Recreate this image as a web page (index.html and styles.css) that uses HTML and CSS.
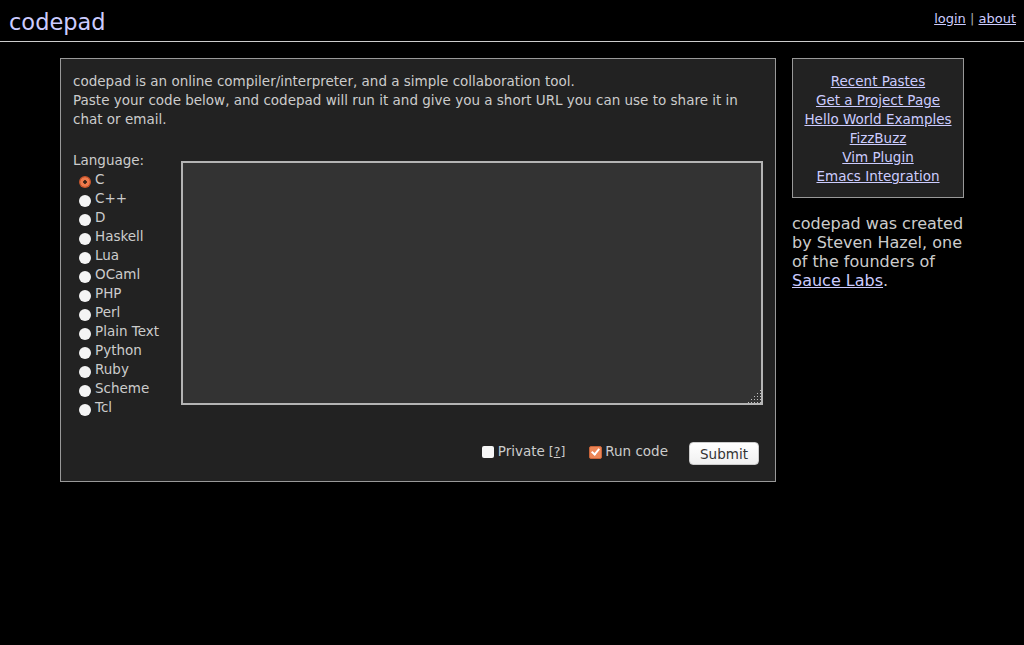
FILE: index.html
```html
<!DOCTYPE html>
<html>
<head>
<meta charset="utf-8">
<title>codepad</title>
<link rel="stylesheet" href="styles.css">
</head>
<body>
<header class="topbar">
  <a class="logo" href="#">codepad</a>
  <nav class="toplinks"><a href="#">login</a> <span class="sep">|</span> <a href="#">about</a></nav>
</header>
<div class="page">
  <main class="mainbox">
    <p class="intro">codepad is an online compiler/interpreter, and a simple collaboration tool.<br>Paste your code below, and codepad will run it and give you a short URL you can use to share it in chat or email.</p>
    <form class="pasteform">
      <div class="editrow">
        <div class="langs">
          <div class="langlabel">Language:</div>
          <label class="lang"><input type="radio" name="lang" checked>C</label>
          <label class="lang"><input type="radio" name="lang">C++</label>
          <label class="lang"><input type="radio" name="lang">D</label>
          <label class="lang"><input type="radio" name="lang">Haskell</label>
          <label class="lang"><input type="radio" name="lang">Lua</label>
          <label class="lang"><input type="radio" name="lang">OCaml</label>
          <label class="lang"><input type="radio" name="lang">PHP</label>
          <label class="lang"><input type="radio" name="lang">Perl</label>
          <label class="lang"><input type="radio" name="lang">Plain Text</label>
          <label class="lang"><input type="radio" name="lang">Python</label>
          <label class="lang"><input type="radio" name="lang">Ruby</label>
          <label class="lang"><input type="radio" name="lang">Scheme</label>
          <label class="lang"><input type="radio" name="lang">Tcl</label>
        </div>
        <textarea class="code"></textarea>
      </div>
      <div class="actions">
        <label class="opt"><input type="checkbox">Private <span class="help">[<a href="#">?</a>]</span></label>
        <label class="opt run"><input type="checkbox" checked>Run code</label>
        <button type="button" class="submit">Submit</button>
      </div>
    </form>
  </main>
  <aside class="side">
    <div class="sidebox">
      <a href="#">Recent Pastes</a>
      <a href="#">Get a Project Page</a>
      <a href="#">Hello World Examples</a>
      <a href="#">FizzBuzz</a>
      <a href="#">Vim Plugin</a>
      <a href="#">Emacs Integration</a>
    </div>
    <p class="credit">codepad was created by Steven Hazel, one of the founders of <a href="#">Sauce Labs</a>.</p>
  </aside>
</div>
</body>
</html>
```
FILE: styles.css
```css
html, body {
  margin: 0;
  padding: 0;
  background: #000;
}
body {
  font-family: "DejaVu Sans", Verdana, sans-serif;
  font-size: 13.5px;
  line-height: 19px;
  color: #ccc;
}
a {
  color: #ccccff;
}
.topbar {
  display: flex;
  justify-content: space-between;
  align-items: center;
  height: 41px;
  border-bottom: 1px solid #ccc;
  padding: 0 8px 0 9px;
}
.logo {
  font-size: 22.5px;
  color: #ccccff;
  text-decoration: none;
  line-height: 26px;
  margin-top: 3px;
}
.toplinks {
  font-size: 13px;
  margin-top: -4px;
}
.sep {
  color: #aaa;
}
.page {
  display: flex;
  align-items: flex-start;
  gap: 16px;
  padding: 16px 0 0 60px;
}
.mainbox {
  width: 690px;
  padding: 13px 12px 11px;
  background: #222;
  border: 1px solid #999;
}
.intro {
  margin: 0 0 22px;
}
.editrow {
  display: flex;
  align-items: flex-start;
}
.langs {
  width: 108px;
  flex: none;
}
.lang {
  display: block;
}
input[type=radio] {
  appearance: none;
  -webkit-appearance: none;
  width: 12px;
  height: 12px;
  margin: 0 4px 0 6px;
  border-radius: 50%;
  background: #f4f4f4;
  vertical-align: -4px;
}
input[type=radio]:checked {
  background: radial-gradient(circle, #3a2418 0 1.5px, #ee7a4c 2.1px 4.3px, #c9562c 4.9px);
}
.code {
  flex: none;
  box-sizing: border-box;
  width: 582px;
  height: 244px;
  margin: 10px 0 0;
  background: #333;
  border: 2px solid #b4b4b4;
  color: #ccc;
}
.code::-webkit-resizer {
  background:
    linear-gradient(to bottom right, #333 50%, transparent 50%),
    conic-gradient(from 90deg at 2px 2px, #bdbdbd 25%, transparent 0) 0 0 / 3px 3px,
    #333;
}
.actions {
  display: flex;
  justify-content: flex-end;
  align-items: flex-start;
  margin-top: 24px;
  height: 29px;
  padding-right: 4px;
}
.opt {
  display: flex;
  align-items: center;
  margin-top: 1px;
}
.run {
  margin-left: 24px;
}
.help {
  margin-left: 4px;
  color: #ccc;
  font-size: 12.5px;
}
.help a {
  color: #ccc;
}
input[type=checkbox] {
  appearance: none;
  -webkit-appearance: none;
  width: 12px;
  height: 12px;
  margin: 1px 4px 0 0;
  border-radius: 2px;
  background: #f6f6f6;
  position: relative;
}
input[type=checkbox]:checked {
  width: 13px;
  height: 13px;
  background: #ec8657;
  border: 1px solid #c8643a;
  box-sizing: border-box;
  margin-right: 3px;
}
input[type=checkbox]:checked::after {
  content: "";
  position: absolute;
  left: 3px;
  top: 0px;
  width: 3px;
  height: 6px;
  border: solid #fff;
  border-width: 0 2px 2px 0;
  transform: rotate(40deg);
}
.submit {
  margin-left: 21px;
  margin-top: 1px;
  width: 70px;
  height: 23px;
  font-family: "DejaVu Sans", Verdana, sans-serif;
  font-size: 13.5px;
  color: #333;
  background: linear-gradient(#fff, #f0f0f0);
  border: 1px solid #ccc;
  border-radius: 4px;
  padding: 0;
}
.side {
  width: 172px;
}
.sidebox {
  border: 1px solid #999;
  background: #222;
  padding: 12px 0;
  text-align: center;
  display: flex;
  flex-direction: column;
  align-items: center;
}
.sidebox a {
  padding-top: 1px;
  margin-bottom: -1px;
}
.credit {
  margin: 16px 0 0;
  font-size: 16px;
}
```
